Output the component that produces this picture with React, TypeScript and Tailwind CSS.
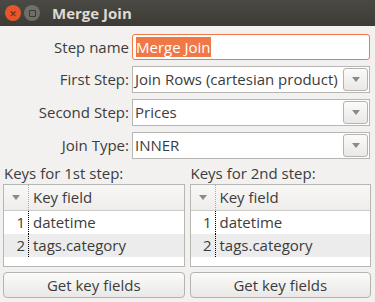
const font = { fontFamily: '"Open Sans", "DejaVu Sans", sans-serif' }

function Arrow() {
  return (
    <svg width="8" height="5" viewBox="0 0 8 5">
      <path d="M0 0 L8 0 L4 5 Z" fill="#8a8a8a" />
    </svg>
  )
}

function Combo({ value }: { value: string }) {
  return (
    <div className="flex h-[27px] flex-1 items-center border border-[#b8b6b2] bg-white pl-[2px] pr-[1px]">
      <span className="flex-1 text-[15px] text-[#3c3c3c]">{value}</span>
      <div className="flex h-[23px] w-[25px] items-center justify-center rounded-[3px] border border-[#b5b3af] bg-gradient-to-b from-[#fbfbfa] to-[#e9e8e6]">
        <Arrow />
      </div>
    </div>
  )
}

function Row({ label, children }: { label: string; children: React.ReactNode }) {
  return (
    <div className="flex items-center">
      <div className="w-[129px] pr-[3px] text-right text-[15px] text-[#3c3c3c]">{label}</div>
      {children}
    </div>
  )
}

function KeyTable({ title }: { title: string }) {
  const rows = ['datetime', 'tags.category']
  return (
    <div className="flex flex-1 flex-col">
      <div className="h-[20px] pl-[1px] text-[15px] leading-[19px] text-[#3c3c3c]">{title}</div>
      <div className="h-[83px] border border-[#b8b6b2] bg-white">
        <div className="flex h-[26px] border-b border-[#cfcdca] bg-gradient-to-b from-[#f8f8f7] to-[#eeedec]">
          <div className="flex w-[25px] items-center justify-center border-r border-dotted border-[#e0a060]">
            <Arrow />
          </div>
          <div className="flex-1 pl-[4px] text-[15px] leading-[25px] text-[#3c3c3c]">Key field</div>
        </div>
        {rows.map((r, i) => (
          <div key={r} className={`flex h-[23px] ${i === 1 ? 'bg-[#ececec]' : ''}`}>
            <div className="w-[25px] border-r border-dotted border-black pr-[3px] text-right text-[15px] leading-[22px] text-[#3c3c3c]">
              {i + 1}
            </div>
            <div className="flex-1 pl-[4px] text-[15px] leading-[22px] text-[#3c3c3c]">{r}</div>
          </div>
        ))}
      </div>
      <button className="mt-[5px] h-[26px] rounded-[4px] border border-[#b5b3af] bg-gradient-to-b from-[#fbfbfa] to-[#e9e8e6] text-[15px] text-[#3c3c3c]">
        Get key fields
      </button>
    </div>
  )
}

export default function App() {
  return (
    <div className="h-[302px] w-[375px] overflow-hidden bg-[#f2f1f0]" style={font}>
      <div className="flex h-[26px] items-center bg-gradient-to-b from-[#4a4944] to-[#3c3b37] pl-[5px]">
        <div className="flex h-[16px] w-[16px] items-center justify-center rounded-full bg-[#e6562b] text-[9px] leading-none text-[#6b1d0b]">
          ✕
        </div>
        <div className="ml-[3px] flex h-[16px] w-[16px] items-center justify-center rounded-full bg-[#6f6e69]">
          <div className="h-[7px] w-[7px] rounded-[1px] border border-[#3a3935]" />
        </div>
        <div className="ml-[12px] text-[15px] font-bold text-[#dfdbd2]">Merge Join</div>
      </div>
      <div className="flex flex-col gap-[6px] pl-[3px] pr-[5px] pt-[8px]">
        <Row label="Step name">
          <div className="flex h-[26px] flex-1 items-center rounded-[3px] border border-[#f07746] bg-white px-[3px]">
            <span className="bg-[#f07746] text-[15px] leading-[20px] text-white">Merge Join</span>
          </div>
        </Row>
        <Row label="First Step:">
          <Combo value="Join Rows (cartesian product)" />
        </Row>
        <Row label="Second Step:">
          <Combo value="Prices" />
        </Row>
        <Row label="Join Type:">
          <Combo value="INNER" />
        </Row>
      </div>
      <div className="mt-[5px] flex gap-[5px] pl-[3px] pr-[4px]">
        <KeyTable title="Keys for 1st step:" />
        <KeyTable title="Keys for 2nd step:" />
      </div>
    </div>
  )
}
